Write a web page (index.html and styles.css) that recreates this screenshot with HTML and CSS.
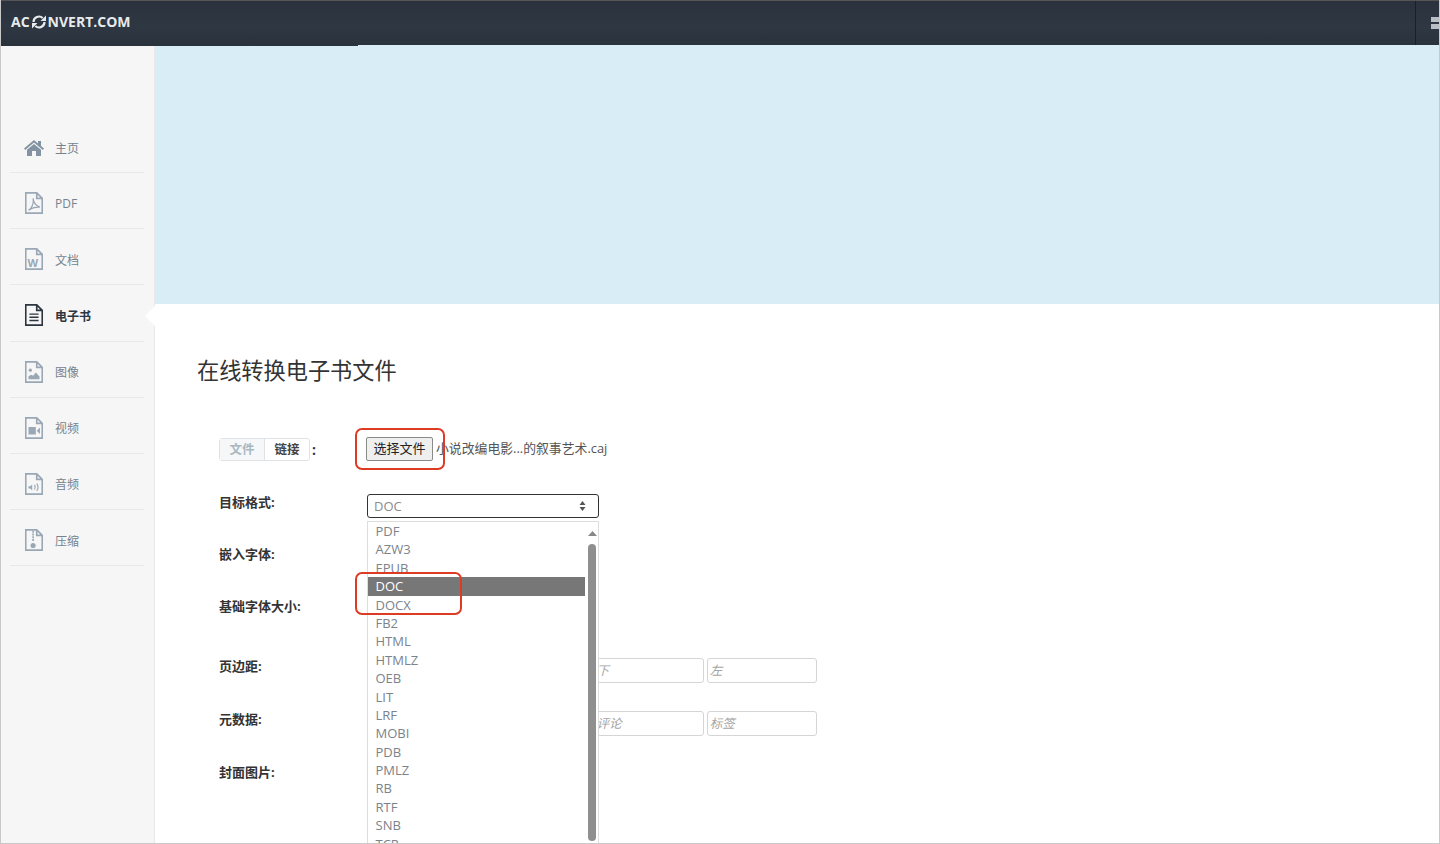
FILE: index.html
```html
<!DOCTYPE html>
<html lang="zh-CN">
<head>
<meta charset="UTF-8">
<meta name="viewport" content="width=device-width, initial-scale=1.0">
<title>在线转换电子书文件</title>
<link rel="stylesheet" href="styles.css">
</head>
<body>
<div class="page">
    <svg class="defs" width="0" height="0">
        <symbol id="doc" viewBox="0 0 20 24">
            <path d="M1 1h12l6 6v16H1zM13 1v6h6" fill="none" stroke="currentColor" stroke-width="1.800"/>
        </symbol>
    </svg>

    <header class="topbar">
        <div class="logo">AC<svg class="logo-icon" width="16" height="14" viewBox="0 0 16 14"><path d="M2.500 7a5.500 5.500 0 0 1 9.200-4M13.500 7a5.500 5.500 0 0 1-9.200 4" fill="none" stroke="currentColor" stroke-width="2.200"/><path d="M9.500 6H15V.500zM6.500 8H1v5.500z" fill="currentColor"/></svg>NVERT.COM</div>
        <div class="top-right"><span></span><span></span></div>
    </header>
    <div class="progress"></div>

    <div class="layout">
        <aside class="sidebar">
            <a class="nav-item">
                <svg class="home-icon" width="20" height="18" viewBox="0 0 20 18"><path d="M10 1 0 9.500l1.200 1.400L10 3.500l8.800 7.400 1.200-1.400-3-2.600V2h-3v2.400z" fill="currentColor"/><path d="M10 5 3 10.800V17h5v-5h4v5h5v-6.200z" fill="currentColor"/></svg>
                <span>主页</span>
            </a>
            <a class="nav-item">
                <svg class="nav-icon" viewBox="0 0 20 24"><use href="#doc"/><path d="M4 20c4-2.500 6-8 5-13 .5 5 3 8 7.500 9.500-5-.5-8.500.5-12.500 3.500z" fill="none" stroke="currentColor" stroke-width="1.300"/></svg>
                <span>PDF</span>
            </a>
            <a class="nav-item">
                <svg class="nav-icon" viewBox="0 0 20 24"><use href="#doc"/><text x="3" y="20.500" class="word-mark">W</text></svg>
                <span>文档</span>
            </a>
            <a class="nav-item active">
                <svg class="nav-icon" viewBox="0 0 20 24"><use href="#doc"/><path d="M5 11h10M5 14.500h10M5 18h10" stroke="currentColor" stroke-width="1.500"/></svg>
                <span>电子书</span>
            </a>
            <a class="nav-item">
                <svg class="nav-icon" viewBox="0 0 20 24"><use href="#doc"/><circle cx="6" cy="10" r="1.800" fill="currentColor"/><path d="M4 20v-3.500l3-1.500 2 1 3-3.500 4 4.500V20z" fill="currentColor"/></svg>
                <span>图像</span>
            </a>
            <a class="nav-item">
                <svg class="nav-icon" viewBox="0 0 20 24"><use href="#doc"/><path d="M4 11h8v8H4zM13 15l3.500-3.500v7z" fill="currentColor"/></svg>
                <span>视频</span>
            </a>
            <a class="nav-item">
                <svg class="nav-icon" viewBox="0 0 20 24"><use href="#doc"/><path d="M4 14.500h2l2-2v6.500l-2-2H4z" fill="currentColor"/><path d="M10.500 13c1 1.500 1 3.500 0 5M13 11.500c1.800 2.500 1.800 5.500 0 8" fill="none" stroke="currentColor" stroke-width="1.300"/></svg>
                <span>音频</span>
            </a>
            <a class="nav-item">
                <svg class="nav-icon" viewBox="0 0 20 24"><use href="#doc"/><path d="M9 2v2M9 5v2M9 8v2M9 11v2" stroke="currentColor" stroke-width="1.800"/><circle cx="9" cy="18" r="2.800" fill="currentColor"/></svg>
                <span>压缩</span>
            </a>
        </aside>

        <main class="content">
            <div class="banner"></div>
            <h1 class="title">在线转换电子书文件</h1>

            <form class="convert-form">
                <div class="form-row file-row">
                    <div class="source">
                        <span class="tabs"><span class="tab tab-on">文件</span><span class="tab">链接</span></span>
                        <b class="colon">:</b>
                    </div>
                    <div class="file-pick">
                        <button type="button" class="file-btn">选择文件</button>
                        <span class="file-name">小说改编电影...的叙事艺术.caj</span>
                    </div>
                </div>

                <div class="form-row">
                    <label>目标格式:</label>
                    <div class="select-wrap">
                        <div class="select">DOC
                            <svg class="select-arrows" width="7" height="12" viewBox="0 0 7 12"><path d="M3.500 1 6.500 5H.500zM3.500 11 .500 7h6z" fill="#555"/></svg>
                        </div>
                        <div class="dropdown">
                            <ul class="options">
                                <li>PDF</li>
                                <li>AZW3</li>
                                <li class="cut">EPUB</li>
                                <li class="selected">DOC</li>
                                <li>DOCX</li>
                                <li>FB2</li>
                                <li>HTML</li>
                                <li>HTMLZ</li>
                                <li>OEB</li>
                                <li>LIT</li>
                                <li>LRF</li>
                                <li>MOBI</li>
                                <li>PDB</li>
                                <li>PMLZ</li>
                                <li>RB</li>
                                <li>RTF</li>
                                <li>SNB</li>
                                <li>TCR</li>
                            </ul>
                            <div class="scroll-track">
                                <svg width="9" height="5" viewBox="0 0 9 5"><path d="M4.500 0 9 5H0z" fill="#888"/></svg>
                                <div class="scroll-thumb"></div>
                            </div>
                        </div>
                    </div>
                </div>

                <div class="form-row">
                    <label>嵌入字体:</label>
                    <div class="plain-box"></div>
                </div>

                <div class="form-row">
                    <label>基础字体大小:</label>
                    <div class="plain-box tall"></div>
                </div>

                <div class="form-row">
                    <label>页边距:</label>
                    <div class="inputs">
                        <input type="text" placeholder="上">
                        <input type="text" placeholder="右">
                        <input type="text" placeholder="下">
                        <input type="text" placeholder="左">
                    </div>
                </div>

                <div class="form-row">
                    <label>元数据:</label>
                    <div class="inputs">
                        <input type="text" placeholder="标题">
                        <input type="text" placeholder="作者">
                        <input type="text" placeholder="评论">
                        <input type="text" placeholder="标签">
                    </div>
                </div>

                <div class="form-row">
                    <label>封面图片:</label>
                    <div class="plain-box"></div>
                </div>
            </form>
        </main>
    </div>

    <div class="mark mark-file"></div>
    <div class="mark mark-doc"></div>
</div>
</body>
</html>
```

FILE: styles.css
```css
* {
    box-sizing: border-box;
}
body {
    margin: 0;
    background-color: white;
    font-family: "Open Sans", "Noto Sans CJK SC", sans-serif;
    color: #333;
}
.defs {
    position: absolute;
}
.page {
    position: relative;
    height: 844px;
    overflow: hidden;
    border: 1px solid #c9c9c9;
    border-top: 0;
}

/* top bar */
.topbar {
    display: flex;
    justify-content: space-between;
    align-items: center;
    height: 45px;
    margin: 0 -1px;
    padding-left: 11px;
    background: linear-gradient(#2b323d, #2e3742 60%, #2a323c);
    border-top: 1px solid #555;
}
.logo {
    display: flex;
    align-items: center;
    margin-bottom: 3px;
    font-size: 14px;
    font-weight: 700;
    color: #e8eaec;
}
.logo-icon {
    margin: 0 1px;
}
.top-right {
    display: flex;
    flex-direction: column;
    justify-content: center;
    gap: 2px;
    align-items: flex-end;
    width: 25px;
    height: 44px;
    border-left: 1px solid #1a2028;
}
.top-right span {
    width: 9px;
    height: 5px;
    background-color: #b9bec4;
}
.progress {
    position: absolute;
    top: 45px;
    left: 0;
    width: 357px;
    height: 1px;
    background-color: #2a323c;
    z-index: 2;
}

.layout {
    display: flex;
    height: 799px;
}

/* sidebar */
.sidebar {
    flex: none;
    width: 154px;
    padding: 72px 10px 0 9px;
    background-color: #f6f6f6;
    border-right: 1px solid #e9e9e9;
}
.nav-item {
    display: flex;
    align-items: center;
    height: 56.150px;
    padding: 6px 0 0 14px;
    font-size: 12px;
    color: #76838f;
    border-bottom: 1px solid #e8e8e8;
}
.nav-item span {
    margin-left: 11px;
}
.nav-icon {
    flex: none;
    width: 20px;
    height: 22px;
    margin-top: -1px;
    color: #9aa8b5;
}
.home-icon {
    flex: none;
    color: #8493a3;
}
.word-mark {
    font-family: "Open Sans", sans-serif;
    font-size: 12px;
    font-weight: 700;
    fill: currentColor;
}
.nav-item.active {
    position: relative;
    color: #2c3540;
    font-weight: 700;
}
.nav-item.active .nav-icon {
    color: #2c3540;
}
.nav-item.active::after {
    content: "";
    position: absolute;
    right: -11px;
    top: 21px;
    border-style: solid;
    border-width: 10px 10px 10px 0;
    border-color: transparent white transparent transparent;
}

/* content */
.content {
    flex: 1;
    min-width: 0;
}
.banner {
    height: 259px;
    background-color: #d9edf7;
}
.title {
    margin: 52px 0 0 42px;
    font-size: 22.200px;
    line-height: 30px;
    font-weight: 400;
    color: #333;
}
.convert-form {
    display: flex;
    flex-direction: column;
    gap: 28px;
    margin: 51px 0 0 64px;
}
.form-row {
    display: grid;
    grid-template-columns: 148px 1fr;
    align-items: start;
}
.form-row label {
    font-size: 13px;
    line-height: 16px;
    font-weight: 700;
}
.file-row {
    margin-bottom: 5px;
}
.source {
    display: flex;
    align-items: center;
    height: 24px;
}
.tabs {
    display: flex;
    height: 23px;
    border: 1px solid #dfe3e6;
    border-radius: 3px;
}
.tab {
    width: 44px;
    font-size: 12.500px;
    font-weight: 700;
    line-height: 21px;
    text-align: center;
    color: #444;
}
.tab-on {
    width: 45px;
    color: #a9b7c2;
    background-color: #f5f7f8;
    border-right: 1px solid #dfe3e6;
}
.colon {
    margin-left: 2px;
    font-size: 14px;
}
.file-pick {
    display: flex;
    align-items: center;
    gap: 3px;
    margin-left: -1px;
    height: 24px;
    font-size: 12.850px;
}
.file-btn {
    width: 67px;
    height: 24px;
    padding: 0 0 3px;
    font-family: inherit;
    font-size: 13px;
    color: #222;
    background-color: #efefef;
    border: 1px solid #8a8a8a;
    border-radius: 2px;
}
.file-name {
    margin-bottom: 3px;
    color: #555;
}

/* select and its open list */
.select-wrap {
    position: relative;
    width: 232px;
}
.select {
    display: flex;
    justify-content: space-between;
    align-items: center;
    height: 24px;
    padding: 0 12px 0 6px;
    font-size: 13px;
    color: #8a8a8a;
    background-color: white;
    border: 1.500px solid #333;
    border-radius: 3px;
}
.dropdown {
    position: absolute;
    top: 27px;
    left: 0;
    z-index: 3;
    display: flex;
    width: 232px;
    height: 330px;
    overflow: hidden;
    background-color: white;
    border: 1px solid #ddd;
    border-bottom: 0;
}
.options {
    flex: none;
    width: 217px;
    margin: 0;
    padding: 0;
    list-style: none;
    font-size: 13px;
    color: #7b838b;
}
.options li {
    height: 18.400px;
    padding-left: 7.500px;
    line-height: 18.400px;
}
.options li.cut {
    height: 14px;
    margin-bottom: 4.400px;
    overflow: hidden;
}
.options li.selected {
    color: white;
    background-color: #777;
}
.scroll-track {
    display: flex;
    flex-direction: column;
    align-items: center;
    width: 14px;
    margin-left: 1px;
    padding-top: 9px;
}
.scroll-thumb {
    width: 8px;
    height: 297px;
    margin-top: 8px;
    background-color: #8f8f8f;
    border-radius: 4px;
}

/* fields under the open list */
.plain-box {
    width: 232px;
    height: 24px;
    border: 1px solid #d5d5d5;
    border-radius: 3px;
}
.plain-box.tall {
    height: 32px;
}
.inputs {
    display: flex;
    gap: 3px;
    width: 450px;
}
.inputs input {
    flex: 1;
    min-width: 0;
    height: 25px;
    padding: 0 2px;
    font-family: inherit;
    font-size: 12.500px;
    border: 1px solid #d5d5d5;
    border-radius: 3px;
}
.inputs input::placeholder {
    color: #a5a5a5;
    font-style: italic;
}

/* red notes drawn over the screenshot */
.mark {
    position: absolute;
    z-index: 4;
    border: 2px solid #dc3c24;
    border-radius: 7px;
}
.mark-file {
    left: 354px;
    top: 428px;
    width: 90px;
    height: 42px;
}
.mark-doc {
    left: 354px;
    top: 572px;
    width: 107px;
    height: 43px;
}
```
